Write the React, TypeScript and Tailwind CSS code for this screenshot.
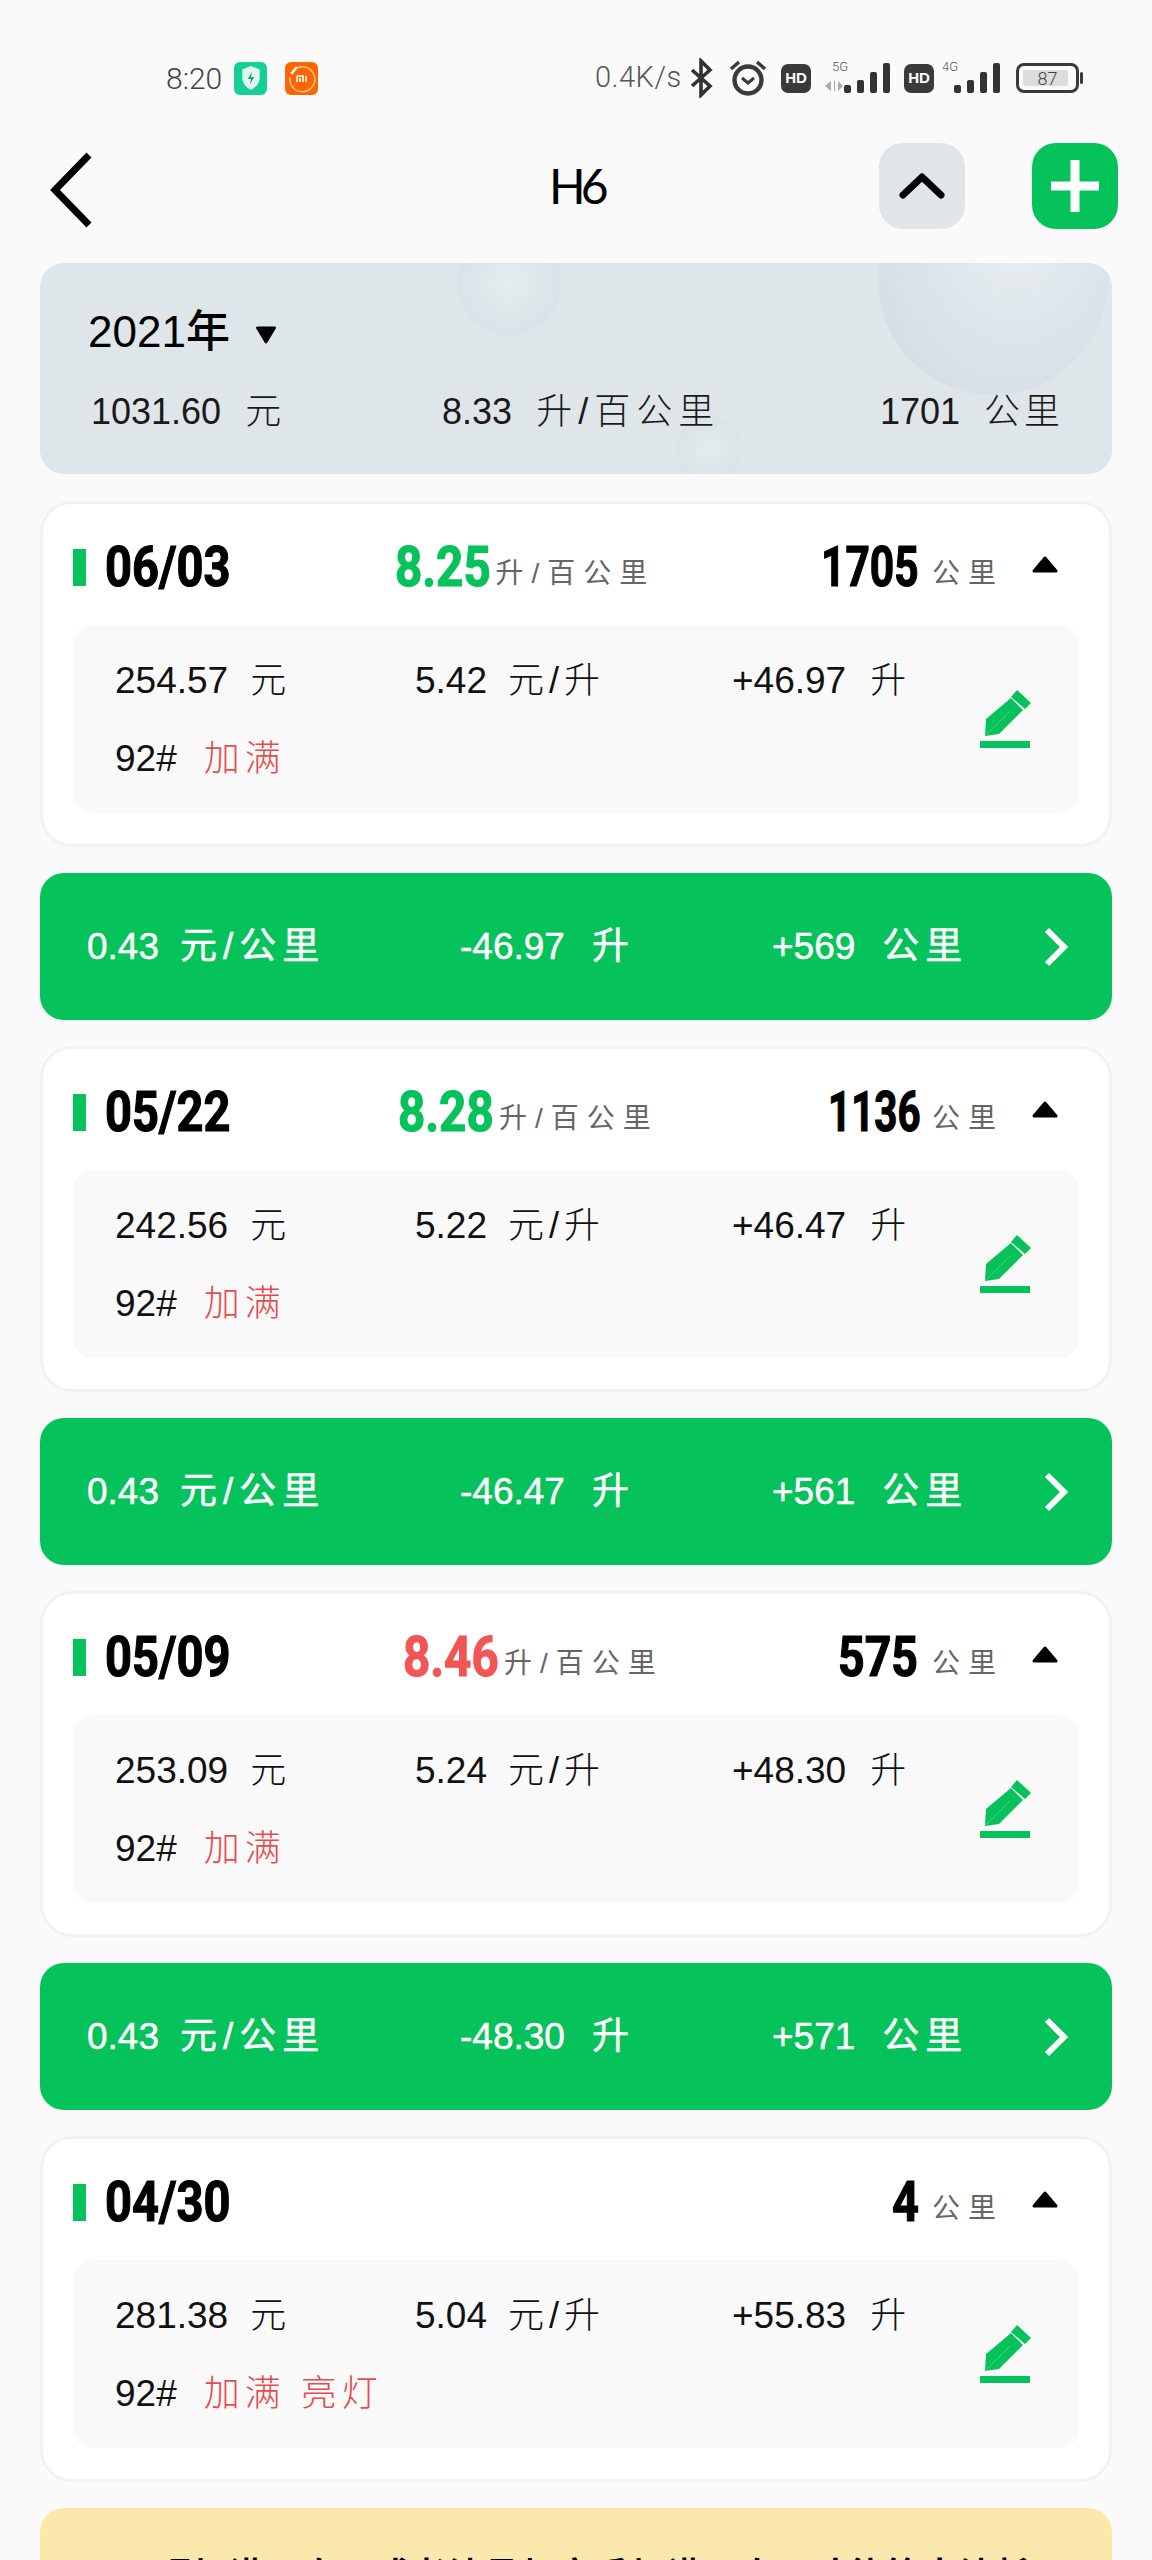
import React from 'react';

const cjk = "font-['Liberation_Sans','Noto_Sans_CJK_SC',sans-serif]";
const heavy = "inline-block origin-left whitespace-nowrap font-['Roboto',sans-serif] font-bold [-webkit-text-stroke:1.2px_currentColor]";

const records = [
  { date: '06/03', rate: '8.25', rateCls: 'text-[#06c25a]', km: '1705', kmCls: 'scale-x-[0.76]', kmWrap: 'w-[97px]', cost: '254.57', price: '5.42', vol: '+46.97', note: '加满' },
  { date: '05/22', rate: '8.28', rateCls: 'text-[#06c25a]', km: '1136', kmCls: 'scale-x-[0.72]', kmWrap: 'w-[90px]', cost: '242.56', price: '5.22', vol: '+46.47', note: '加满' },
  { date: '05/09', rate: '8.46', rateCls: 'text-[#f25555]', km: '575', kmCls: 'scale-x-[0.83]', kmWrap: 'w-[80px]', cost: '253.09', price: '5.24', vol: '+48.30', note: '加满' },
  { date: '04/30', rate: '', rateCls: '', km: '4', kmCls: 'scale-x-[0.84]', kmWrap: 'w-[26px]', cost: '281.38', price: '5.04', vol: '+55.83', note: '加满 亮灯' },
];

const trips = [
  { perKm: '0.43', used: '-46.97', dist: '+569' },
  { perKm: '0.43', used: '-46.47', dist: '+561' },
  { perKm: '0.43', used: '-48.30', dist: '+571' },
];

function Signal5G() {
  return (
    <svg width="67" height="36" viewBox="0 0 67 36" className="shrink-0">
      <text x="8" y="11" fontSize="13" fill="#555" fontFamily="Roboto" fontWeight="300">5G</text>
      <path d="M7 21l-6 5 6 5zM10 21h1v10h-1zM14 31l5-5-5-5z" fill="#aaa" />
      <rect x="20" y="25" width="7" height="8" rx="2" fill="#333" />
      <rect x="33" y="20" width="7" height="13" rx="2" fill="#333" />
      <rect x="46" y="12" width="7" height="21" rx="2" fill="#333" />
      <rect x="59" y="3" width="7" height="30" rx="2" fill="#333" />
    </svg>
  );
}

function Signal4G() {
  return (
    <svg width="59" height="36" viewBox="0 0 59 36" className="shrink-0">
      <text x="0" y="11" fontSize="13" fill="#555" fontFamily="Roboto" fontWeight="300">4G</text>
      <rect x="12" y="25" width="7" height="8" rx="2" fill="#333" />
      <rect x="25" y="20" width="7" height="13" rx="2" fill="#333" />
      <rect x="38" y="12" width="7" height="21" rx="2" fill="#333" />
      <rect x="51" y="3" width="7" height="30" rx="2" fill="#333" />
    </svg>
  );
}

function HdBadge() {
  return (
    <span className="w-[30px] h-[29px] rounded-[7px] bg-[#3a3a3a] text-white text-[15px] font-bold flex items-center justify-center shrink-0 font-['Liberation_Sans',sans-serif]">
      HD
    </span>
  );
}

function StatusBar() {
  return (
    <div className="h-[140px] pt-[58px] pl-[166px] pr-[69px] flex items-start justify-between">
      <div className="flex items-center h-[40px]">
        <span className="text-[30px] font-light text-[#444] font-['Roboto',sans-serif] w-[68px]">8:20</span>
        <span className="w-[33px] h-[33px] rounded-[6px] bg-[#15cf96] flex items-center justify-center">
          <svg width="22" height="26" viewBox="0 0 20 24">
            <path d="M10 1l8 3v8c0 5-4 9-8 11-4-2-8-6-8-11V4z" fill="#dff8ef" />
            <path d="M11 6l-4 7h3l-1 5 4-7h-3z" fill="#2a9d78" />
          </svg>
        </span>
        <span className="ml-[18px] w-[33px] h-[33px] rounded-[6px] bg-[#ff6600] flex items-center justify-center">
          <svg width="30" height="30" viewBox="0 0 30 30">
            <path d="M9 5.5a12.5 12.5 0 1 1-6 9" fill="none" stroke="#ffd9bf" strokeWidth="1.2" />
            <path d="M5 10l4-5" stroke="#fff" strokeWidth="2.6" strokeLinecap="round" />
            <path d="M10 13h6v6M10 13v6M13 15v4M19 13v6" fill="none" stroke="#fff" strokeWidth="1.6" />
          </svg>
        </span>
      </div>
      <div className="flex items-center h-[40px]">
        <span className="text-[29px] font-light text-[#555] font-['Roboto',sans-serif] w-[82px] whitespace-nowrap tracking-[0.5px]">0.4K/s</span>
        <svg width="24" height="40" viewBox="0 0 24 40" className="ml-[12px]">
          <path d="M3 12l18 16-9 9V3l9 9L3 28" fill="none" stroke="#333" strokeWidth="3.6" />
        </svg>
        <svg width="40" height="38" viewBox="0 0 40 38" className="ml-[15px]">
          <circle cx="20" cy="21" r="13.5" fill="none" stroke="#3a3a3a" strokeWidth="4.4" />
          <path d="M14 19l6 5 6-5" fill="none" stroke="#3a3a3a" strokeWidth="3" />
          <path d="M3 10l8-7M37 10l-8-7" stroke="#3a3a3a" strokeWidth="3.4" />
        </svg>
        <span className="ml-[13px]"><HdBadge /></span>
        <span className="ml-[13px]"><Signal5G /></span>
        <span className="ml-[13px]"><HdBadge /></span>
        <span className="ml-[8px]"><Signal4G /></span>
        <span className="relative ml-[15px] w-[63px] h-[30px] rounded-[8px] border-[3px] border-[#3a3a3a] flex items-center justify-center shrink-0">
          <span className="absolute left-[4px] top-[4px] bottom-[4px] right-[8px] rounded-[2px] bg-[#dcdcdc]" />
          <span className="relative text-[18px] font-light text-[#444] font-['Roboto',sans-serif]">87</span>
        </span>
        <span className="ml-[1px] w-[3px] h-[12px] rounded-full bg-[#3a3a3a]" />
      </div>
    </div>
  );
}

function Header() {
  return (
    <div className="h-[92px] flex items-center pl-[48px] pr-[34px]">
      <svg width="46" height="76" viewBox="0 0 46 76" className="mt-[8px] shrink-0">
        <path d="M41 3L7 38l34 35" fill="none" stroke="#000" strokeWidth="7" />
      </svg>
      <span className="ml-[455px] text-[48px] leading-[48px] text-black font-['Lato',sans-serif] tracking-[-5px]">H6</span>
      <div className="ml-auto flex items-center gap-[67px]">
        <button className="w-[86px] h-[86px] rounded-[24px] bg-[#dfe5e9] flex items-center justify-center">
          <svg width="46" height="30" viewBox="0 0 46 30">
            <path d="M4 24L23 6l19 18" fill="none" stroke="#000" strokeWidth="7" strokeLinecap="round" strokeLinejoin="round" />
          </svg>
        </button>
        <button className="w-[86px] h-[86px] rounded-[24px] bg-[#06c25a] flex items-center justify-center">
          <svg width="48" height="52" viewBox="0 0 48 52">
            <path d="M24 0v52M0 26h48" stroke="#fff" strokeWidth="9" />
          </svg>
        </button>
      </div>
    </div>
  );
}

function Summary() {
  return (
    <div className={`relative overflow-hidden mx-[40px] mt-[31px] h-[211px] rounded-[24px] bg-[#dfe6ea] pt-[44px] px-[48px] ${cjk}`}>
      <div className="absolute left-[417px] -top-[32px] w-[104px] h-[104px] rounded-full bg-radial from-[#e6ecef] to-[#d5dfe5]" />
      <div className="absolute left-[838px] -top-[98px] w-[230px] h-[230px] rounded-full bg-radial-[at_60%_30%] from-[#e9eef1] to-[#cfdae2]" />
      <div className="absolute left-[636px] top-[154px] w-[66px] h-[66px] rounded-full bg-radial from-[#e5ebee] to-[#d6e0e5]" />
      <div className="relative flex items-center h-[50px]">
        <span className="text-[44px] leading-[50px] text-black font-medium">2021年</span>
        <svg width="26" height="19" viewBox="0 0 24 20" className="ml-[23px] mt-[4px]">
          <path d="M3 3h18L12 18z" fill="#000" stroke="#000" strokeWidth="3" strokeLinejoin="round" />
        </svg>
      </div>
      <div className="relative flex mt-[33px] text-[36px] leading-[44px] text-[#1a1a1a] font-light pl-[3px]">
        <span className="w-[352px] whitespace-nowrap">1031.60<span className="ml-[24px]">元</span></span>
        <span className="w-[439px] whitespace-nowrap">8.33<span className="ml-[24px] tracking-[6px]">升/百公里</span></span>
        <span className="whitespace-nowrap">1701<span className="ml-[24px] tracking-[4px]">公里</span></span>
      </div>
    </div>
  );
}

function RecordCard({ r }: { r: (typeof records)[number] }) {
  return (
    <div className={`mx-[40px] h-[346px] rounded-[32px] bg-white border-[3px] border-[#f2f2f2] px-[30px] pt-[28px] ${cjk}`}>
      <div className="h-[70px] flex items-center justify-between pr-[21px]">
        <div className="flex items-center">
          <span className="w-[13px] h-[37px] bg-[#06c25a] mr-[19px]" />
          <span className="w-[124px]">
            <span className={`text-[56px] leading-[56px] text-black scale-x-[0.84] ${heavy}`}>{r.date}</span>
          </span>
        </div>
        {r.rate && (
          <div className="flex items-end">
            <span className="w-[94px]">
              <span className={`text-[56px] leading-[56px] scale-x-[0.85] ${heavy} ${r.rateCls}`}>{r.rate}</span>
            </span>
            <span className="ml-[7px] text-[28px] leading-[42px] text-[#666] tracking-[8px]">升/百公里</span>
          </div>
        )}
        <div className="flex items-end">
          <span className={r.kmWrap}>
            <span className={`text-[56px] leading-[56px] text-black ${heavy} ${r.kmCls}`}>{r.km}</span>
          </span>
          <span className="ml-[14px] text-[28px] leading-[42px] text-[#666] tracking-[8px]">公里</span>
          <svg width="26" height="18" viewBox="0 0 26 18" className="ml-[28px] mb-[21px]">
            <path d="M13 2L24 15H2z" fill="#000" stroke="#000" strokeWidth="3" strokeLinejoin="round" />
          </svg>
        </div>
      </div>
      <div className="relative mt-[23px] h-[188px] rounded-[20px] bg-[#f9f9f9] pl-[42px] pt-[34px] text-[37px] leading-[44px] text-[#111] font-light">
        <div className="flex">
          <span className="w-[300px] whitespace-nowrap">{r.cost}<span className="ml-[22px] text-[36px]">元</span></span>
          <span className="w-[317px] whitespace-nowrap">{r.price}<span className="ml-[21px] text-[36px] tracking-[5px]">元/升</span></span>
          <span className="whitespace-nowrap">{r.vol}<span className="ml-[24px] text-[36px]">升</span></span>
        </div>
        <div className="mt-[34px]">
          92#<span className="ml-[27px] text-[36px] text-[#e54d4d] tracking-[5px]">{r.note}</span>
        </div>
        <svg width="52" height="58" viewBox="0 0 52 58" className="absolute right-[47px] top-[65px]">
          <path d="M5 46l1-17L31 8l12 12-24 24zM37 0l14 13-6 6-14-12z" fill="#06c25a" />
          <path d="M6 45L30 21" stroke="#3fd283" strokeWidth="1" />
          <rect x="0" y="51" width="50" height="7" fill="#06c25a" />
        </svg>
      </div>
    </div>
  );
}

function TripBar({ t }: { t: (typeof trips)[number] }) {
  return (
    <div className={`mx-[40px] h-[147px] rounded-[24px] bg-[#06c25a] flex items-center pl-[47px] pr-[42px] text-white text-[37px] [-webkit-text-stroke:0.5px_white] whitespace-nowrap ${cjk}`}>
      <span className="w-[373px]">{t.perKm}<span className="ml-[21px] tracking-[6px]">元/公里</span></span>
      <span className="w-[312px]">{t.used}<span className="ml-[27px]">升</span></span>
      <span>{t.dist}<span className="ml-[27px] tracking-[6px]">公里</span></span>
      <svg width="28" height="40" viewBox="0 0 28 40" className="ml-auto">
        <path d="M5 3l17 17L5 37" fill="none" stroke="#fff" strokeWidth="6" />
      </svg>
    </div>
  );
}

export default function App() {
  return (
    <div className="w-[1152px] h-[2560px] overflow-hidden bg-[#fafafa]">
      <StatusBar />
      <Header />
      <Summary />
      <div className="flex flex-col gap-[26px] mt-[27px]">
        <RecordCard r={records[0]} />
        <TripBar t={trips[0]} />
        <RecordCard r={records[1]} />
        <TripBar t={trips[1]} />
        <RecordCard r={records[2]} />
        <TripBar t={trips[2]} />
        <RecordCard r={records[3]} />
        <div className={`mx-[40px] h-[120px] rounded-t-[24px] bg-[#fbe8ac] pt-[50px] text-center text-[34px] leading-[34px] font-bold text-black tracking-[2.5px] whitespace-nowrap overflow-hidden ${cjk}`}>
          平顶加满两次，或者油量灯亮后加满两次，才能算出油耗
        </div>
      </div>
    </div>
  );
}
